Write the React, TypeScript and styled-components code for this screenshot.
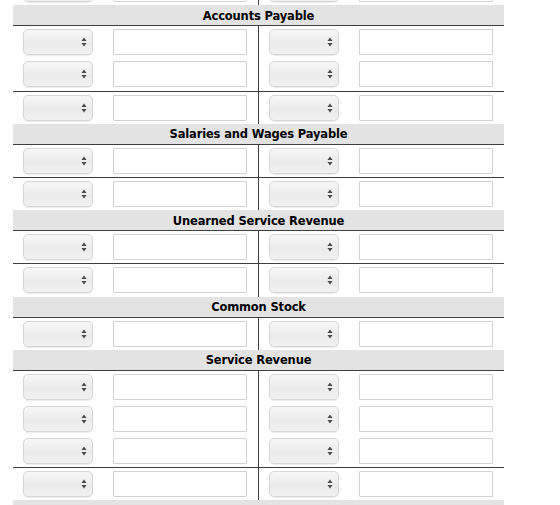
import React from "react";
import styled, { createGlobalStyle } from "styled-components";

const GlobalStyle = createGlobalStyle`
  html, body {
    margin: 0;
    padding: 0;
    background: #ffffff;
    overflow: hidden;
  }
  body {
    font-family: "DejaVu Sans", Verdana, sans-serif;
  }
`;

const Page = styled.div`
  width: 560px;
  height: 505px;
  overflow: hidden;
  padding-left: 13px;
  box-sizing: border-box;
`;

const Ledger = styled.div`
  width: 491px;
  margin-top: -27px;
  display: flex;
  flex-direction: column;
`;

const AccountHeader = styled.div`
  height: 21px;
  flex: none;
  background: #e3e3e3;
  border-bottom: 1px solid #3f3f3f;
  display: flex;
  align-items: center;
  justify-content: center;
  font-family: "DejaVu Sans", Verdana, sans-serif;
  font-size: 11.5px;
  font-weight: bold;
  color: #000;
  letter-spacing: -0.15px;
  padding-top: 1px;
  box-sizing: border-box;
`;

const EntryRow = styled.div<{ $ruled?: boolean }>`
  display: grid;
  grid-template-columns: 246px 1fr;
  border-top: ${(p) => (p.$ruled ? "1px solid #3f3f3f" : "none")};
`;

const Side = styled.div<{ $debit?: boolean }>`
  display: flex;
  align-items: center;
  gap: 20px;
  padding: 3px 0 3.2px 10px;
  border-right: ${(p) => (p.$debit ? "1px solid #3f3f3f" : "none")};
`;

const SelectWrap = styled.div`
  position: relative;
  width: 70px;
  height: 26px;
  flex: none;
`;

const AccountSelect = styled.select`
  appearance: none;
  -webkit-appearance: none;
  width: 100%;
  height: 100%;
  box-sizing: border-box;
  border: 1px solid #d6d6d6;
  border-radius: 5px;
  background: linear-gradient(#f7f7f7, #ebebeb 55%, #f1f1f1);
  box-shadow: 0 1px 1px rgba(0, 0, 0, 0.08);
  font-family: "DejaVu Sans", sans-serif;
  font-size: 12px;
  color: #222;
  padding: 0 16px 0 6px;
  outline: none;
`;

const Arrows = styled.svg`
  position: absolute;
  right: 6px;
  top: 50%;
  margin-top: -5px;
  pointer-events: none;
`;

const AmountInput = styled.input`
  width: 134px;
  height: 26px;
  box-sizing: border-box;
  border: 1px solid #d2d2d2;
  border-radius: 1px;
  background: #fff;
  padding: 0 5px;
  font-family: "DejaVu Sans", sans-serif;
  font-size: 12px;
  outline: none;
  flex: none;
`;

type Entry = { ruled?: boolean };
type Account = { title: string; entries: Entry[] };

const accounts: Account[] = [
  { title: "Accounts Payable", entries: [{}, {}, { ruled: true }] },
  { title: "Salaries and Wages Payable", entries: [{}, { ruled: true }] },
  { title: "Unearned Service Revenue", entries: [{}, { ruled: true }] },
  { title: "Common Stock", entries: [{}] },
  { title: "Service Revenue", entries: [{}, {}, {}, { ruled: true }] },
];

function Picker() {
  return (
    <SelectWrap>
      <AccountSelect defaultValue="">
        <option value=""></option>
      </AccountSelect>
      <Arrows width="6" height="10" viewBox="0 0 6 10">
        <path d="M3 0.5 L5.5 4 L0.5 4 Z" fill="#4a4a4a" />
        <path d="M3 9.5 L5.5 6 L0.5 6 Z" fill="#4a4a4a" />
      </Arrows>
    </SelectWrap>
  );
}

function Entry({ ruled }: Entry) {
  return (
    <EntryRow $ruled={ruled}>
      <Side $debit>
        <Picker />
        <AmountInput type="text" />
      </Side>
      <Side>
        <Picker />
        <AmountInput type="text" />
      </Side>
    </EntryRow>
  );
}

export default function App() {
  return (
    <>
      <GlobalStyle />
      <Page>
        <Ledger>
          <Entry />
          {accounts.map((a) => (
            <React.Fragment key={a.title}>
              <AccountHeader>{a.title}</AccountHeader>
              {a.entries.map((e, i) => (
                <Entry key={i} ruled={e.ruled} />
              ))}
            </React.Fragment>
          ))}
          <AccountHeader />
        </Ledger>
      </Page>
    </>
  );
}
